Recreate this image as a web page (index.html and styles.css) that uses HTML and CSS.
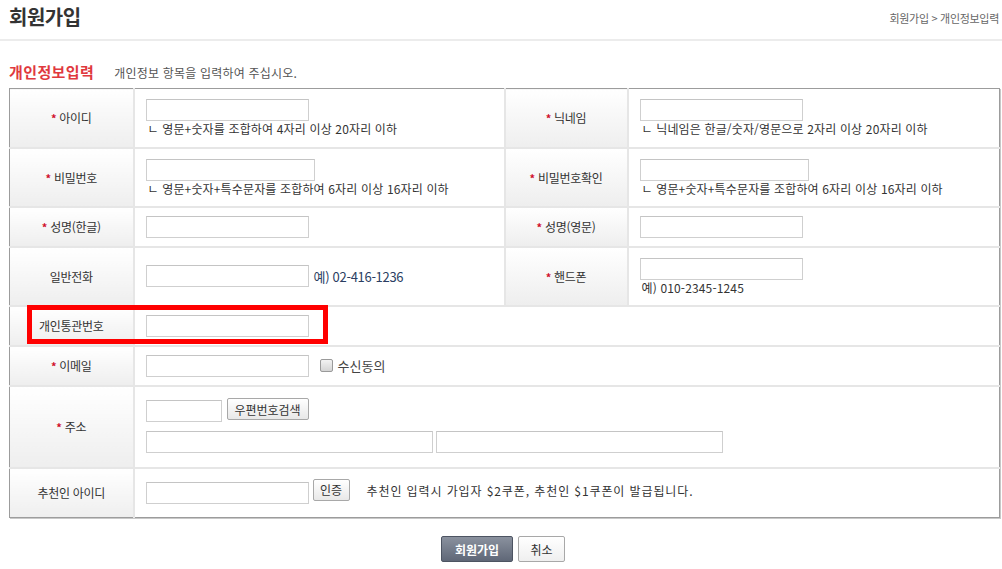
FILE: index.html
```html
<!DOCTYPE html>
<html lang="ko">
<head>
<meta charset="utf-8">
<title>회원가입</title>
<link rel="stylesheet" href="styles.css">
</head>
<body>
<div class="page">
  <header class="top">
    <h1 class="title">회원가입</h1>
    <div class="crumb">회원가입 &gt; 개인정보입력</div>
  </header>
  <div class="section">
    <h2 class="sec-title">개인정보입력</h2>
    <span class="sec-desc">개인정보 항목을 입력하여 주십시오.</span>
  </div>
  <table class="form">
    <colgroup>
      <col class="c-l"><col class="c-v"><col class="c-l2"><col class="c-v2">
    </colgroup>
    <tr class="r-tall">
      <th><span class="req">*</span> 아이디</th>
      <td><span class="inp w163"></span><div class="hint">ㄴ 영문+숫자를 조합하여 4자리 이상 20자리 이하</div></td>
      <th><span class="req">*</span> 닉네임</th>
      <td><span class="inp w163"></span><div class="hint">ㄴ 닉네임은 한글/숫자/영문으로 2자리 이상 20자리 이하</div></td>
    </tr>
    <tr class="r-tall">
      <th><span class="req">*</span> 비밀번호</th>
      <td><span class="inp w169"></span><div class="hint">ㄴ 영문+숫자+특수문자를 조합하여 6자리 이상 16자리 이하</div></td>
      <th><span class="req">*</span> 비밀번호확인</th>
      <td><span class="inp w169"></span><div class="hint">ㄴ 영문+숫자+특수문자를 조합하여 6자리 이상 16자리 이하</div></td>
    </tr>
    <tr class="r-short">
      <th><span class="req">*</span> 성명(한글)</th>
      <td><span class="inp w163"></span></td>
      <th><span class="req">*</span> 성명(영문)</th>
      <td><span class="inp w163"></span></td>
    </tr>
    <tr class="r-tall">
      <th>일반전화</th>
      <td><div class="line"><span class="inp w163"></span><span class="ex">예) 02-416-1236</span></div></td>
      <th><span class="req">*</span> 핸드폰</th>
      <td><span class="inp w163"></span><div class="hint">예) 010-2345-1245</div></td>
    </tr>
    <tr class="r-short">
      <th>개인통관번호</th>
      <td colspan="3"><span class="inp w163"></span></td>
    </tr>
    <tr class="r-short">
      <th><span class="req">*</span> 이메일</th>
      <td colspan="3"><div class="line"><span class="inp w163"></span><span class="chk"></span><span class="chk-label">수신동의</span></div></td>
    </tr>
    <tr class="r-addr">
      <th><span class="req">*</span> 주소</th>
      <td colspan="3">
        <div class="line"><span class="inp w76"></span><span class="btn btn-zip">우편번호검색</span></div>
        <div class="line line2"><span class="inp w287"></span><span class="inp w287 ml3"></span></div>
      </td>
    </tr>
    <tr class="r-rec">
      <th>추천인 아이디</th>
      <td colspan="3"><div class="line"><span class="inp w163"></span><span class="btn btn-auth">인증</span><span class="rec-note">추천인 입력시 가입자 $2쿠폰, 추천인 $1쿠폰이 발급됩니다.</span></div></td>
    </tr>
  </table>
  <div class="actions">
    <span class="act act-join">회원가입</span>
    <span class="act act-cancel">취소</span>
  </div>
  <div class="highlight"></div>
</div>
</body>
</html>
```
FILE: styles.css
```css
html, body {
  margin: 0;
  padding: 0;
  background: #fff;
}
body {
  font-family: "Noto Sans CJK KR", "Noto Sans", sans-serif;
  font-size: 12px;
  color: #333;
}
.page {
  position: relative;
  width: 1002px;
  height: 569px;
  overflow: hidden;
}
.top {
  display: flex;
  justify-content: space-between;
  align-items: center;
  height: 39px;
  padding: 0 3px 0 9px;
  border-bottom: 2px solid #ececec;
}
.title {
  margin: -6px 0 0 0;
  font-size: 20px;
  font-weight: bold;
  color: #333;
  line-height: 24px;
  letter-spacing: -0.5px;
}
.crumb {
  font-size: 11px;
  color: #666;
  margin-top: -4px;
  letter-spacing: -0.3px;
}
.section {
  display: flex;
  align-items: baseline;
  padding: 20px 0 0 9px;
  height: 27px;
}
.sec-title {
  margin: 0;
  font-size: 15px;
  font-weight: bold;
  color: #e0393e;
  line-height: 22px;
  letter-spacing: 0.4px;
}
.sec-desc {
  margin-left: 20px;
  font-size: 12px;
  color: #555;
  letter-spacing: 0.2px;
}
.form {
  margin-left: 9px;
  width: 990px;
  border-collapse: collapse;
  table-layout: fixed;
  border: 1px solid #9c9c9c;
  box-shadow: 1px 1px 0 #c8c8c8;
}
.c-l { width: 124px; }
.c-v { width: 371px; }
.c-l2 { width: 123px; }
.c-v2 { width: 372px; }
.form th, .form td {
  border-bottom: 2px solid #e6e6e6;
  padding: 0;
  vertical-align: middle;
}
.form tr:last-child th, .form tr:last-child td {
  border-bottom: none;
}
.form th {
  font-weight: normal;
  text-align: center;
  color: #333;
  font-size: 12px;
  background: linear-gradient(#ffffff, #eeeeee);
  border-right: 2px solid #e6e6e6;
  letter-spacing: -0.3px;
}
.form td {
  padding-left: 11px;
  border-right: 2px solid #e6e6e6;
}
.form td:last-child { border-right: none; }
.r-tall { height: 59px; }
.r-short { height: 40px; }
.r-addr { height: 82px; }
.r-rec { height: 50px; }
.req {
  color: #d0102c;
  font-weight: bold;
  font-size: 11px;
}
.inp {
  display: inline-block;
  box-sizing: border-box;
  height: 22px;
  border: 1px solid #cfcfcf;
  border-top-color: #c4c4c4;
  background: #fff;
  vertical-align: middle;
}
.w163 { width: 163px; }
.w169 { width: 169px; }
.w76 { width: 76px; }
.w287 { width: 287px; }
.ml3 { margin-left: 3px; }
.form td > .inp { display: block; }
.hint {
  margin-top: 1px;
  line-height: 14px;
  font-size: 12px;
  color: #333;
  padding-left: 2px;
  letter-spacing: 0.15px;
}
.line {
  display: flex;
  align-items: center;
}
.line2 { margin-top: 9px; }
.ex {
  margin-left: 5px;
  font-size: 13px;
  color: #2b3e62;
  letter-spacing: -0.3px;
}
.chk {
  margin-left: 11px;
  width: 11px;
  height: 11px;
  border: 1px solid #9a9a9a;
  border-radius: 2px;
  background: linear-gradient(#f2f2f2, #d4d4d4);
}
.chk-label {
  margin-left: 5px;
  font-size: 13px;
  color: #444;
}
.btn {
  display: inline-flex;
  align-items: center;
  justify-content: center;
  box-sizing: border-box;
  height: 22px;
  border: 1px solid #a8a8a8;
  border-radius: 2px;
  background: linear-gradient(#ffffff, #e8e8e8);
  font-size: 12px;
  color: #333;
}
.btn-zip {
  width: 82px;
  margin-left: 5px;
  margin-top: -4px;
}
.btn-auth {
  width: 37px;
  margin-left: 4px;
  margin-top: -6px;
}
.rec-note {
  margin-left: 17px;
  margin-top: -4px;
  color: #333;
  letter-spacing: 0.9px;
}
.actions {
  display: flex;
  justify-content: center;
  gap: 5px;
  margin-top: 18px;
  padding-left: 4px;
}
.act {
  display: inline-flex;
  align-items: center;
  justify-content: center;
  box-sizing: border-box;
  height: 26px;
  font-size: 12px;
  border-radius: 2px;
}
.act-join {
  width: 72px;
  background: linear-gradient(#8a919e, #5f6777);
  border: 1px solid #4d5462;
  color: #fff;
  font-weight: bold;
}
.act-cancel {
  width: 47px;
  background: linear-gradient(#ffffff, #efefef);
  border: 1px solid #a8a8a8;
  color: #333;
}
.highlight {
  position: absolute;
  left: 27px;
  top: 305px;
  width: 301px;
  height: 39px;
  box-sizing: border-box;
  border: 5px solid #ff0000;
  pointer-events: none;
}
```
